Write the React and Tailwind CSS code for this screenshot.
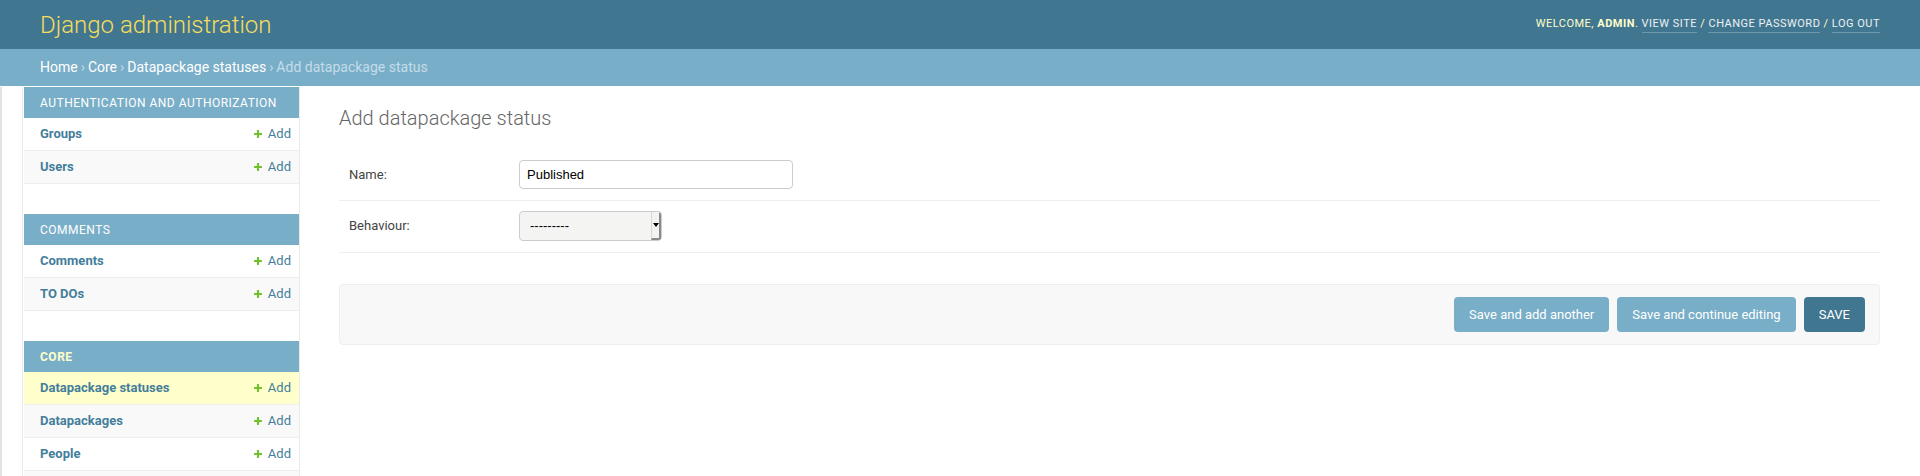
import React from "react";

function PlusIcon() {
  return (
    <svg width="10" height="10" viewBox="0 0 1792 1792" className="shrink-0">
      <path
        fill="#70bf2b"
        d="M1600 796v192q0 40-28 68t-68 28h-416v416q0 40-28 68t-68 28h-192q-40 0-68-28t-28-68v-416h-416q-40 0-68-28t-28-68v-192q0-40 28-68t68-28h416v-416q0-40 28-68t68-28h192q40 0 68 28t28 68v416h416q40 0 68 28t28 68z"
      />
    </svg>
  );
}

function Row({ name, bg }) {
  return (
    <div
      className={`h-[33px] border-b border-[#eee] flex items-center justify-between pl-4 pr-2 ${bg}`}
    >
      <span className="text-[13px] font-bold text-[#447e9b]">{name}</span>
      {name ? (
        <span className="flex items-center gap-[5px] text-[13px] text-[#447e9b]">
          <PlusIcon />
          Add
        </span>
      ) : null}
    </div>
  );
}

function Module({ title, current, rows }) {
  return (
    <div className="mb-[30px]">
      <div
        className={`h-[31px] bg-[#79aec8] px-4 flex items-center whitespace-nowrap text-[12px] tracking-[0.5px] uppercase ${
          current ? "font-bold text-[#ffc]" : "text-white"
        }`}
      >
        {title}
      </div>
      {rows.map((r, i) => (
        <Row key={i} name={r.name} bg={r.bg} />
      ))}
    </div>
  );
}

export default function App() {
  return (
    <div className="h-[476px] overflow-hidden bg-white font-['Roboto',sans-serif] text-[#333]">
      {/* Header */}
      <div className="h-[49px] bg-[#417690] flex items-center justify-between px-10">
        <div className="text-[24px] font-light text-[#f5dd5d] leading-[28px]">
          Django administration
        </div>
        <div className="text-[11px] tracking-[0.5px] uppercase text-[#ffc] flex items-center">
          <span>Welcome,&nbsp;</span>
          <strong className="font-bold">admin</strong>
          <span>.&nbsp;</span>
          <span className="text-white/90 border-b border-white/25">View site</span>
          <span>&nbsp;/&nbsp;</span>
          <span className="text-white/90 border-b border-white/25">Change password</span>
          <span>&nbsp;/&nbsp;</span>
          <span className="text-white/90 border-b border-white/25">Log out</span>
        </div>
      </div>

      {/* Breadcrumbs */}
      <div className="h-[37px] bg-[#79aec8] px-10 flex items-center text-[14px] text-[#c4dce8]">
        <span className="text-white">Home</span>
        <span className="mx-[3px]">›</span>
        <span className="text-white">Core</span>
        <span className="mx-[3px]">›</span>
        <span className="text-white">Datapackage statuses</span>
        <span className="mx-[3px]">›</span>
        <span>Add datapackage status</span>
      </div>

      {/* Main */}
      <div className="flex h-[390px]">
        {/* Toggle */}
        <div className="w-[23px] shrink-0 flex border-r border-[#eaeaea] pt-[1px]">
          <div className="w-[2px] bg-[#e2e2e2]" />
          <div className="flex-1 bg-white" />
        </div>

        {/* Sidebar */}
        <div className="w-[277px] shrink-0 border-r border-[#eaeaea] pt-[1px] pl-[1px] bg-white">
          <Module
            title="Authentication and Authorization"
            rows={[
              { name: "Groups", bg: "bg-white" },
              { name: "Users", bg: "bg-[#f9f9f9]" },
            ]}
          />
          <Module
            title="Comments"
            rows={[
              { name: "Comments", bg: "bg-white" },
              { name: "TO DOs", bg: "bg-[#f9f9f9]" },
            ]}
          />
          <Module
            title="Core"
            current
            rows={[
              { name: "Datapackage statuses", bg: "bg-[#ffc]" },
              { name: "Datapackages", bg: "bg-[#f9f9f9]" },
              { name: "People", bg: "bg-white" },
              { name: "", bg: "bg-[#f9f9f9]" },
            ]}
          />
        </div>

        {/* Content */}
        <div className="flex-1 pl-[39px] pr-10 pt-5">
          <h1 className="text-[20px] font-light text-[#666] leading-[24px] mb-5">
            Add datapackage status
          </h1>

          <div className="border-b border-[#eee] pl-[10px] pt-[10px] pb-[11px] flex items-center">
            <label className="w-[170px] shrink-0 text-[13px] text-[#444]">Name:</label>
            <div className="w-[274px] h-[29px] border border-[#ccc] rounded-[4px] bg-white flex items-center pl-[7px] font-['Liberation_Sans',Arial,sans-serif] text-[13px] text-black">
              Published
            </div>
          </div>

          <div className="border-b border-[#eee] pl-[10px] pt-[10px] pb-[11px] flex items-center">
            <label className="w-[170px] shrink-0 text-[13px] text-[#444]">Behaviour:</label>
            <div className="w-[143px] h-[30px] border border-[#ccc] rounded-[4px] bg-[#f4f4f3] flex items-stretch overflow-hidden">
              <div className="flex-1 flex items-center pl-[10px] font-['Liberation_Sans',Arial,sans-serif] text-[13px] text-black">
                ---------
              </div>
              <div className="w-[10px] border-l border-[#d8d8d8] border-r-2 border-b-2 border-r-[#8a8a8a] border-b-[#8a8a8a] bg-[#f3f3f3] flex items-center justify-center">
                <div className="w-0 h-0 border-l-[3px] border-r-[3px] border-t-[4px] border-l-transparent border-r-transparent border-t-black" />
              </div>
            </div>
          </div>

          <div className="mt-[31px] border border-[#eee] rounded-[4px] bg-[#f8f8f8] px-[14px] py-3 flex justify-end gap-2">
            <div className="h-[35px] px-[15px] rounded-[4px] bg-[#79aec8] text-white text-[13px] flex items-center">
              Save and add another
            </div>
            <div className="h-[35px] px-[15px] rounded-[4px] bg-[#79aec8] text-white text-[13px] flex items-center">
              Save and continue editing
            </div>
            <div className="h-[35px] px-[15px] rounded-[4px] bg-[#417690] text-white text-[13px] flex items-center">
              SAVE
            </div>
          </div>
        </div>
      </div>
    </div>
  );
}
